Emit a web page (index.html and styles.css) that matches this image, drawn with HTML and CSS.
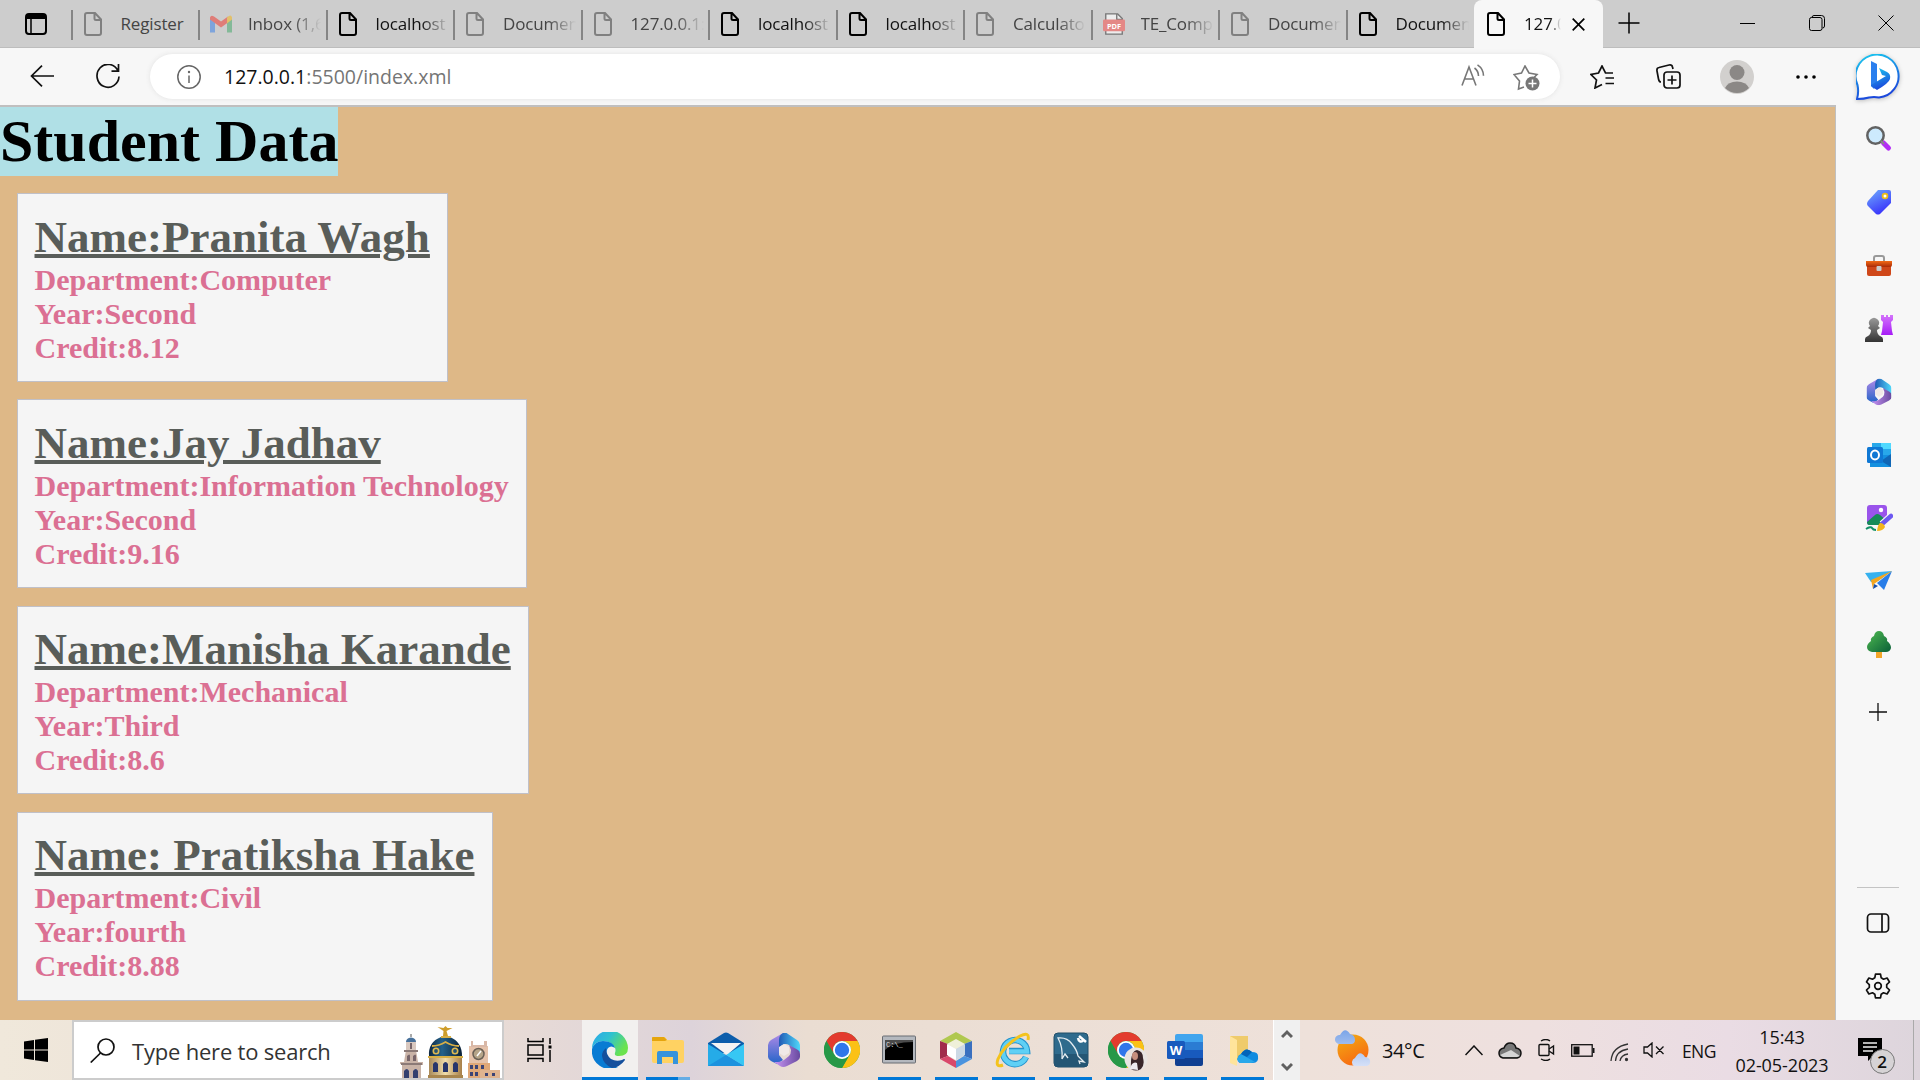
FILE: index.html
```html
<!DOCTYPE html>
<html lang="en">
<head>
<meta charset="utf-8">
<title>127.0.0.1:5500/index.xml</title>
<link rel="stylesheet" href="styles.css">
</head>
<body>
<svg class="defs" aria-hidden="true">
  <defs>
    <symbol id="file" viewBox="0 0 18 24"><path d="M3 1h8l6 6.500v13.500a2 2 0 0 1-2 2H3a2 2 0 0 1-2-2V3a2 2 0 0 1 2-2zM10.500 1v5.500a1.500 1.500 0 0 0 1.500 1.500h5" fill="none" stroke="currentColor" stroke-width="2"/></symbol>
    <linearGradient id="m1" x1="0" y1="0" x2="0" y2="1"><stop offset="0" stop-color="#b48be8"/><stop offset="1" stop-color="#2364c8"/></linearGradient>
    <linearGradient id="m2" x1="0" y1="0" x2="1" y2="0"><stop offset="0" stop-color="#215ab5"/><stop offset="1" stop-color="#4fd8fa"/></linearGradient>
    <linearGradient id="m3" x1="0" y1="0" x2="1" y2="0"><stop offset="0" stop-color="#c895f4"/><stop offset="1" stop-color="#694a9f"/></linearGradient>
    <symbol id="m365" viewBox="0 0 32 34"><path d="M15 0 3 7Q0 9 0 12v12q0 2 3 4l6 3 6-4-4-5V12q0-3 5-5l3-6Q17-1 15 0z" fill="url(#m1)"/><path d="M15 0q3-1 5 1l9 6q3 2 3 5v8L21 12q-5-3-10 3V7q0-5 4-7z" fill="url(#m2)"/><path d="m21 12 9 5q2 1 2 4v3q0 2-3 4l-10 5q-4 2-7 0l-6-4h4q3 0 6-2l5-4q2-2 2-6z" fill="url(#m3)"/><path d="m16 11 5 3v6l-5 3-5-3v-6z" fill="#f1e9e7"/></symbol>
    <symbol id="chrome" viewBox="0 0 36 36"><circle cx="18" cy="18" r="18" fill="#34a853"/><path d="M2.400 9A18 18 0 0 1 33.600 9H18a9 9 0 0 0-7.800 13.500z" fill="#e33b2e"/><path d="M33.600 9A18 18 0 0 1 18 36l7.800-13.500A9 9 0 0 0 18 9z" fill="#fbc116"/><path d="M2.400 9 10.200 22.500A9 9 0 0 0 25.800 22.500L18 36A18 18 0 0 1 2.400 9z" fill="#279847"/><circle cx="18" cy="18" r="9" fill="#fff"/><circle cx="18" cy="18" r="7.200" fill="#2f76ea"/></symbol>
    <linearGradient id="bingg" x1="0" y1="0" x2="0.300" y2="1"><stop offset="0" stop-color="#19cdf0"/><stop offset="1" stop-color="#1b48dc"/></linearGradient>
    <linearGradient id="tagg" x1="0" y1="0" x2="0.500" y2="1"><stop offset="0" stop-color="#70aefc"/><stop offset="1" stop-color="#3a35fb"/></linearGradient>
    <linearGradient id="boxg" x1="0" y1="0" x2="0" y2="1"><stop offset="0" stop-color="#f36b16"/><stop offset="1" stop-color="#a92a08"/></linearGradient>
    <linearGradient id="pawn" x1="0" y1="0" x2="0" y2="1"><stop offset="0" stop-color="#999"/><stop offset="1" stop-color="#333"/></linearGradient>
    <linearGradient id="rook" x1="0" y1="0" x2="0" y2="1"><stop offset="0" stop-color="#d474fb"/><stop offset="1" stop-color="#a61cf6"/></linearGradient>
    <linearGradient id="treeg" x1="0" y1="0" x2="1" y2="1"><stop offset="0" stop-color="#4fba50"/><stop offset="1" stop-color="#0a6038"/></linearGradient>
    <linearGradient id="edgeTop" x1="0" y1="0" x2="1" y2="0.500"><stop offset="0" stop-color="#2ba6ee"/><stop offset="0.500" stop-color="#2fc2cf"/><stop offset="1" stop-color="#6be34d"/></linearGradient>
    <linearGradient id="sun" x1="0" y1="0" x2="0.500" y2="1"><stop offset="0" stop-color="#f2b013"/><stop offset="1" stop-color="#f76a12"/></linearGradient>
    <linearGradient id="cloud" x1="0" y1="0" x2="0" y2="1"><stop offset="0" stop-color="#7ba5e8"/><stop offset="1" stop-color="#d5e0f7"/></linearGradient>
    <linearGradient id="domeg" x1="0" y1="0" x2="1" y2="0"><stop offset="0" stop-color="#0e2740"/><stop offset="0.400" stop-color="#23618a"/><stop offset="1" stop-color="#0a2036"/></linearGradient>
    <linearGradient id="stone" x1="0" y1="0" x2="1" y2="0"><stop offset="0" stop-color="#a98a5a"/><stop offset="0.500" stop-color="#f0dcaa"/><stop offset="1" stop-color="#a8804a"/></linearGradient>
  </defs>
</svg>

<header class="tabstrip">
  <div class="tabmenu"><svg width="22" height="22" viewBox="0 0 22 22"><rect x="1" y="1" width="20" height="20" rx="3" fill="none" stroke="#000" stroke-width="2"/><path d="M1 1h20v5H1z" fill="#000"/><path d="M6 6v15" stroke="#000" stroke-width="1.500"/></svg></div>
  <div class="tab dim"><svg class="fav"><use href="#file"/></svg><span>Register</span></div>
  <div class="tab dim gmail"><svg class="fav" viewBox="0 0 22 17"><path d="M0 2v15h5V6z" fill="#7ea4dc"/><path d="M17 6v11h5V2z" fill="#83b998"/><path d="M0 2q1-3 4-1l7 5 7-5v6l-7 5-11-8z" fill="#df7d78"/><path d="M17 2q4-4 5 0v2l-5 4z" fill="#e2c06a"/></svg><span>Inbox (1,6</span></div>
  <div class="tab"><svg class="fav"><use href="#file"/></svg><span>localhost</span></div>
  <div class="tab dim"><svg class="fav"><use href="#file"/></svg><span>Documen</span></div>
  <div class="tab dim"><svg class="fav"><use href="#file"/></svg><span>127.0.0.1:</span></div>
  <div class="tab"><svg class="fav"><use href="#file"/></svg><span>localhost</span></div>
  <div class="tab"><svg class="fav"><use href="#file"/></svg><span>localhost</span></div>
  <div class="tab dim"><svg class="fav"><use href="#file"/></svg><span>Calculato</span></div>
  <div class="tab dim pdf"><svg class="fav" viewBox="0 0 24 24"><path d="M3 1h13l5 5v17H3z" fill="#ededed" stroke="#777" stroke-width="1.500"/><path d="M15 1v6h6" fill="none" stroke="#777" stroke-width="1.500"/><rect x="0" y="7" width="24" height="13" rx="1.500" fill="#e48886"/><text x="12" y="17" text-anchor="middle" class="pdftext">PDF</text></svg><span>TE_Comp</span></div>
  <div class="tab dim"><svg class="fav"><use href="#file"/></svg><span>Documen</span></div>
  <div class="tab"><svg class="fav"><use href="#file"/></svg><span>Documen</span></div>
  <div class="tab active"><svg class="fav"><use href="#file"/></svg><span>127.0</span><svg class="x" width="13" height="13" viewBox="0 0 13 13"><path d="m.7.700 11.600 11.600m0-11.600L.7 12.300" stroke="#000" stroke-width="1.700"/></svg></div>
  <svg class="newtab" width="22" height="22" viewBox="0 0 22 22"><path d="M11 .500v21M.500 11h21" stroke="#000" stroke-width="1.500"/></svg>
  <div class="winbtns">
    <svg width="16" height="16" viewBox="0 0 16 16"><path d="M0 8.500h15" stroke="#000"/></svg>
    <svg width="16" height="16" viewBox="0 0 16 16" fill="none" stroke="#000"><rect x=".5" y="2.500" width="12.500" height="13" rx="2"/><path d="M3 2.500Q3 .500 5 .500h7.500q3 0 3 3V11q0 2-2 2"/></svg>
    <svg width="16" height="16" viewBox="0 0 16 16"><path d="m.5.500 15 15m0-15-15 15" stroke="#000"/></svg>
  </div>
</header>

<nav class="toolbar">
  <svg class="back" width="24" height="22" viewBox="0 0 24 22" fill="none" stroke="#111" stroke-width="1.700"><path d="M12 .700 1.500 11 12 21.300M1.500 11H24"/></svg>
  <svg class="reload" width="24" height="25" viewBox="0 0 24 25" fill="none" stroke="#111" stroke-width="1.700"><path d="M22 7A11 11.500 0 1 0 23 12.500M22.500 0v7.200H15.500"/></svg>
  <div class="address">
    <svg width="24" height="24" viewBox="0 0 24 24"><circle cx="12" cy="12" r="11.200" fill="none" stroke="#666" stroke-width="1.500"/><path d="M12 10.500v7.500" stroke="#666" stroke-width="1.500"/><circle cx="12" cy="7" r="1.200" fill="#666"/></svg>
    <span class="url"><b>127.0.0.1</b>:5500/index.xml</span>
    <svg class="aloud" width="24" height="23" viewBox="0 0 24 23" fill="none" stroke="#777" stroke-width="1.600"><path d="m1 21.500 7-18.500 7 18.500M3.500 15h9M13.500 4q4 3 4 8M16.500.800q6 4 6 11"/></svg>
    <svg class="staradd" width="27" height="26" viewBox="0 0 27 26"><path d="m11 22-5.500 2 1-8L1 9.500l7.500-1.500L12 1l4 7 8 1.500-3 3" fill="none" stroke="#777" stroke-width="1.600"/><circle cx="19.500" cy="18.500" r="7" fill="#777"/><path d="M19.500 14.500v8m-4-4h8" stroke="#fff" stroke-width="1.500"/></svg>
  </div>
  <svg class="fav-list" width="25" height="24" viewBox="0 0 25 24" fill="none" stroke="#111" stroke-width="1.700"><path d="m12 19.500-7 3.500 1.500-8L1 9.500 8.500 8 12 1l3.500 7H23M15.500 13H24M15.500 18.500H24"/></svg>
  <svg class="collect" width="25" height="25" viewBox="0 0 25 25" fill="none" stroke="#111" stroke-width="1.700"><rect x="8" y="8" width="16" height="16" rx="3"/><path d="M16 11.500v9M11.500 16h9M5 18q-2 0-2.500-3L1 7q-.500-3 2-3.500L13 1q3-.500 3.500 2l.5 2"/></svg>
  <svg class="avatar" width="34" height="34" viewBox="0 0 34 34"><circle cx="17" cy="17" r="17" fill="#d2d0ce"/><circle cx="17" cy="12.500" r="7.500" fill="#8b8886"/><path d="M5 28q3-6.500 12-6.500T29 28A17 17 0 0 1 5 28z" fill="#8b8886"/></svg>
  <svg class="dots" width="20" height="4" viewBox="0 0 20 4"><circle cx="2" cy="2" r="1.800"/><circle cx="10" cy="2" r="1.800"/><circle cx="18" cy="2" r="1.800"/></svg>
  <svg class="bing" width="46" height="46" viewBox="0 0 46 46"><path d="M1 45Q3 38 1.500 31A21.500 21.500 0 1 1 23 43.500Q18 42.500 13 43.500 8 45 1 45z" fill="#fff" stroke="url(#bingg)" stroke-width="2"/><path d="m15 7 6 3v20l-3 5-3-3z" fill="#2b7fee"/><path d="m15 31 15-9-4-1-3-7 8 4q4 2 3 7-1 4-13 11l-6-4z" fill="url(#bingg)"/></svg>
</nav>

<div class="middle">
  <main class="page">
    <h1>Student Data</h1>
    <section class="card"><h2>Name:Pranita Wagh</h2><p>Department:Computer</p><p>Year:Second</p><p>Credit:8.12</p></section>
    <section class="card"><h2>Name:Jay Jadhav</h2><p>Department:Information Technology</p><p>Year:Second</p><p>Credit:9.16</p></section>
    <section class="card"><h2>Name:Manisha Karande</h2><p>Department:Mechanical</p><p>Year:Third</p><p>Credit:8.6</p></section>
    <section class="card"><h2>Name: Pratiksha Hake</h2><p>Department:Civil</p><p>Year:fourth</p><p>Credit:8.88</p></section>
  </main>
  <aside class="sidebar">
    <svg viewBox="0 0 28 28"><path d="m18.500 18 5 5" stroke="#b32cf5" stroke-width="5" stroke-linecap="round"/><circle cx="10.500" cy="10.500" r="8.200" fill="#cdeafd" stroke="#626262" stroke-width="2.500"/><path d="m16 16 3 3" stroke="#888" stroke-width="2"/></svg>
    <svg viewBox="0 0 28 28"><path d="M13 2h11q2 0 2 2v11L15 26q-2 1-4 0l-8-8q-2-2 0-5z" fill="url(#tagg)"/><circle cx="20" cy="8" r="2.400" fill="#fff" stroke="#eebd18" stroke-width="1.800"/></svg>
    <svg viewBox="0 0 28 28"><path d="M9 10V7q0-2 2-2h6q2 0 2 2v3" fill="none" stroke="#999" stroke-width="2"/><rect x="2" y="12" width="24" height="13" rx="2" fill="#cf4719"/><path d="M1 10h26v4q0 2-2 2H3q-2 0-2-2z" fill="url(#boxg)"/><rect x="11.500" y="15" width="5" height="5" rx="1" fill="#c9cccc"/></svg>
    <svg viewBox="0 0 28 28"><path d="M16 1h3v2h2V1h2v2h2V1h3v5l-2 2 1 9 1 4H16l1-4 1-9-2-2z" fill="url(#rook)"/><path d="M5 12a5 5 0 1 1 8 0l2 2-3 2q0 4 3 6 3 1 3 3v3H0v-3q0-2 3-3 3-2 3-6l-3-2z" fill="url(#pawn)"/></svg>
    <svg viewBox="-1 -1 34 36"><use href="#m365" width="32" height="34"/></svg>
    <svg viewBox="0 0 28 28"><path d="M7 2h19v13H7z" fill="#28a8ea"/><path d="M16 2h10v6H16z" fill="#50d9ff"/><path d="M5 14h21v12H5z" fill="#1490df"/><path d="m26 13-10 7 10 6z" fill="#1066b5"/><rect x="2" y="6" width="16" height="16" rx="1.500" fill="#0f78d4"/><ellipse cx="10" cy="14" rx="4" ry="4.500" fill="none" stroke="#fff" stroke-width="2"/></svg>
    <svg viewBox="0 0 28 28"><rect x="2" y="1" width="20" height="20" rx="3" fill="#9a54eb"/><circle cx="16" cy="6" r="2.200" fill="#fff"/><path d="m2 18 8-7q2-2 5 0l7 6-4 4H4q-2 0-2-3z" fill="#168b58"/><path d="m17 20 9-8" stroke="#f7f7f7" stroke-width="7"/><path d="m17 20 9-8" stroke="#6d58f1" stroke-width="4.500" stroke-linecap="round"/><path d="M15 19q4 0 5 4-2 4-8 4 1-7 3-8z" fill="#f3b51d"/><path d="M1 25q5-3 6-1t4 2" fill="none" stroke="#129066" stroke-width="2"/></svg>
    <svg viewBox="0 0 28 28"><path d="m0 6 27-2-14 10-7 1z" fill="#36b1ee"/><path d="m27 4-8 19-7-7z" fill="#287de8"/><path d="M6 13 27 4 9 17l-1 5z" fill="#f5a61d"/><path d="m8 22 1-5 4 2z" fill="#174eaa"/></svg>
    <svg viewBox="0 0 28 28"><path d="M11 20h6v8h-6z" fill="#f3a62a"/><path d="M14 1q4 0 5 5 4 2 3 5 4 3 4 7-1 4-5 4H7q-5-1-5-5 0-3 4-6-1-3 3-5 1-5 5-5z" fill="url(#treeg)"/></svg>
    <svg class="plus" viewBox="0 0 18 18"><path d="M9 0v18M0 9h18" stroke="#111" stroke-width="1.300"/></svg>
    <hr>
    <svg class="panel" viewBox="0 0 24 20" fill="none" stroke="#111" stroke-width="1.700"><rect x="1.500" y="1" width="21" height="18" rx="3.500"/><path d="M16 1v18"/></svg>
    <svg class="gear" viewBox="0 0 26 26" fill="none" stroke="#111" stroke-width="1.700" stroke-linejoin="round"><path d="M10.500 1.200h5l.7 3.600 2.300 1.400 3.600-1.200 2.400 4-2.800 2.600v2.800l2.800 2.600-2.400 4-3.600-1.200-2.300 1.400-.7 3.600h-5l-.7-3.600-2.300-1.400-3.600 1.200-2.400-4 2.800-2.600v-2.800L1.500 9l2.400-4 3.600 1.200 2.300-1.400z"/><circle cx="13" cy="13" r="3.300"/></svg>
  </aside>
</div>

<footer class="taskbar">
  <div class="start"><svg width="24" height="24" viewBox="0 0 24 24"><path d="M0 3.500 10 2v9.400H0zM11 1.800 24 0v11.400H11zM0 12.400h10V22L0 20.500zM11 12.400h13V24l-13-1.800z"/></svg></div>
  <div class="search">
    <svg width="25" height="25" viewBox="0 0 25 25" fill="none" stroke="#111" stroke-width="1.700"><circle cx="16" cy="9" r="8"/><path d="M10.500 15 .700 24.500"/></svg>
    <span>Type here to search</span>
    <svg class="city" width="104" height="53" viewBox="0 0 104 53">
      <path d="M4 53V39H2v-2h4l2-12h10l2 12h5v3h-2v13z" fill="#c9b3a7"/><path d="M6 25h14v2H6zM3 38h21v2H3z" fill="#8b7a77"/><path d="M8 16h10v9H8z" fill="#d9c8bf"/><path d="M8 17q0-4 5-4.500 5 .500 5 4.500z" fill="#48719b"/><path d="M12 18h2v6h-2zM9 31q3-3 3 0v5H9zM15 31q3-3 3 0v5h-3z" fill="#77656a"/><path d="M6 46q3-4 5 0v7H6zM15 46q3-4 5 0v7h-5z" fill="#33406f"/><path d="M13 12v-3" stroke="#555"/>
      <path d="M31 31h33v22H31z" fill="url(#stone)"/><path d="M31 31Q30 17 43 12h9q12 5 12 19z" fill="url(#domeg)"/><path d="M34 21q7 0 13.500-4 6.500 4 13.500 4M30 32h35M43 12h10" stroke="#d8af45" stroke-width="1.800" fill="none"/><circle cx="38" cy="26" r="2.700" fill="#28536f" stroke="#ddb851" stroke-width="1.600"/><circle cx="57" cy="26" r="2.700" fill="#28536f" stroke="#ddb851" stroke-width="1.600"/><path d="M45 11h5L48.500 6l6-3-5 0-2-2-2 2-6-1 6 4z" fill="#cf9e2c"/><path d="M35 39q2.500-4 5 0v8h-5zM45 39q2.500-4 5 0v8h-5zM55 39q2.500-4 5 0v8h-5z" fill="#27356b"/><path d="M30 50h35v3H30z" fill="#a8854d"/>
      <path d="M71 21h19v20H71z" fill="#e5c2aa"/><path d="M73 16h2v4h11v-4h3v6H73z" fill="#d9b8a7"/><path d="M70 38h22v15H70z" fill="#e0a878"/><circle cx="80.500" cy="29" r="5.500" fill="#b5a488" stroke="#6a6056" stroke-width="1.500"/><path d="m79 31 4-5" stroke="#fff" stroke-width="1.500"/><path d="M82 45h20v8H82z" fill="#dfb48f"/><path d="M72 40h3v4h-3zM77 40h3v4h-3zM83 40h3v4h-3zM72 47h3v4h-3zM77 47h3v4h-3zM87 48h3v3h-3zM94 48h3v3h-3z" fill="#3c4475"/>
    </svg>
  </div>
  <div class="taskview"><svg width="25" height="24" viewBox="0 0 25 24" fill="none" stroke="#000" stroke-width="1.500"><path d="M1 0v3.500h15V0M1 24v-3.500h15V24M1 7h15v10H1zM23 0v6M23 12v12"/><path d="M21.500 7.500h3v3h-3z" fill="#000" stroke="none"/></svg></div>
  <div class="apps">
    <div class="app current"><svg viewBox="0 0 36 36"><path d="M0 17A18 18 0 0 1 36 16q0 8-9 8-5 0-4-3 1-3 0-5-3-7-12-7Q3 9 0 17z" fill="url(#edgeTop)"/><path d="M0 17Q3 9 11 9q10 0 12 7-4-3-7 0-3 4-1 9 3 8 11 10A18 18 0 0 1 0 17z" fill="#087bd3"/><path d="M14 16q-4 3-4 8 1 8 10 12 8-1 13-8 0-2-3 0-6 2-11-1-5-4-5-11z" fill="#15509d"/></svg></div>
    <div class="app open stacked"><svg viewBox="0 0 36 36"><path d="M2 6q0-1 1-1h11q2 0 3 3h15q2 0 2 2v19q0 2-2 2H4q-2 0-2-2z" fill="#ffd262"/><path d="M2 9V6q0-1 1-1h11l3 3-2 1z" fill="#e5a50d"/><path d="M7 32V21q0-2 2-2h17q2 0 2 2v11h-5v-7H12v7z" fill="#3693dc"/></svg></div>
    <div class="app"><svg viewBox="0 0 36 36"><path d="M0 11 16 1q2-1 4 0l16 10v10H0z" fill="#0c5dab"/><path d="M3 11h30l-14 12z" fill="#f4f3f3"/><path d="M0 12 36 34H0z" fill="#25abe8"/><path d="m36 12-18 11 18 11z" fill="#37c7f4"/><path d="m0 34 18-11 18 11z" fill="#1c92de"/></svg></div>
    <div class="app"><svg viewBox="0 0 36 36"><use href="#m365" x="2" y="1" width="32" height="34"/></svg></div>
    <div class="app"><svg><use href="#chrome"/></svg></div>
    <div class="app open"><svg viewBox="0 0 36 36"><rect x="1.500" y="4" width="33" height="27" rx="1" fill="#b4b8be" stroke="#686c72"/><path d="M4 8h28v20H4z" fill="#000"/><path d="M4 8h28v2Q12 10 4 18z" fill="#4b4b4b"/><text x="5" y="14.500" class="cmdtext">C:\_</text></svg></div>
    <div class="app open"><svg viewBox="0 0 36 36"><path d="M18 0 34 9 26 12 18 8l-8 4-8-3z" fill="#b0c84f"/><path d="m2 9 8 3v12l-8 3z" fill="#a12c4b"/><path d="m34 9-8 3v12l8 3z" fill="#3a70bf"/><path d="m2 27 8-3 8 5v7z" fill="#d9486b"/><path d="m34 27-8-3-8 5v7z" fill="#4b94df"/><path d="m18 7 9 5-9 5-9-5z" fill="#eff0d9"/><path d="m9 12 9 5v11l-9-5z" fill="#fff"/><path d="m27 12-9 5v11l9-5z" fill="#ccd9e5"/></svg></div>
    <div class="app open"><svg viewBox="0 0 36 36"><path d="M31 25A12 12 0 1 1 32 19H14" fill="none" stroke="#2593cc" stroke-width="6.500"/><path d="M31 25A12 12 0 1 1 32 19.500H14" fill="none" stroke="#5fd0f5" stroke-width="4.500"/><path d="M8 33q-8 3-5-6Q9 13 25 4q10-5 8 4" fill="none" stroke="#f4c31d" stroke-width="3"/></svg></div>
    <div class="app open"><svg viewBox="0 0 36 36"><rect x="1" y="1" width="34" height="34" rx="4" fill="#2f6b8d" stroke="#204e69"/><path d="M1 22h34v9q0 4-4 4H5q-4 0-4-4z" fill="#245674"/><path d="M9 27Q10 15 5 6q9-1 14 6 5 6 6 12l6 6-5-1 1 3M9 27l3-5 3 4" fill="none" stroke="#e5edf1" stroke-width="1.300"/><path d="m26 4 7 6M25 6q1 5 5 3" stroke="#fff" stroke-width="2.500" fill="none"/></svg></div>
    <div class="app open"><svg class="wide" viewBox="0 0 40 39"><use href="#chrome" width="36" height="36"/><circle cx="28" cy="27" r="11.500" fill="#e9e4e1"/><path d="M23 37q-1-18 6-19 6 1 6 8 2 7-2 11-5 3-10 0z" fill="#39262a"/><ellipse cx="27" cy="24" rx="3" ry="4" fill="#c78f7e"/><path d="M22 37q2-8 7-6l1 7z" fill="#edebf0"/></svg></div>
    <div class="app open"><svg viewBox="0 0 36 36"><path d="M8 4q0-2 2-2h24q2 0 2 2v6H8z" fill="#41a5ee"/><path d="M8 10h28v8H8z" fill="#2b7cd3"/><path d="M8 18h28v8H8z" fill="#185abd"/><path d="M8 26h28v6q0 2-2 2H10q-2 0-2-2z" fill="#103f91"/><rect x="0" y="9" width="18" height="18" rx="1.500" fill="#185abd"/><text x="9" y="22.500" text-anchor="middle" class="wordtext">W</text></svg></div>
    <div class="app open"><svg viewBox="0 0 36 36"><path d="M6 4h18v24H6z" fill="#efcb6b"/><path d="m6 4 7 4v26l-7-3z" fill="#ffe49b"/><path d="M16 31a5 5 0 0 1 1-9q5-8 11-2 6 0 6 4 1 7-5 7z" fill="#108be0"/><path d="m17 22 14 8-4 1H16q-6-4 1-9z" fill="#28a8ea"/><path d="M17 22q5-8 11-2l-5 5z" fill="#0364b8"/></svg></div>
  </div>
  <div class="scroller"><svg viewBox="0 0 12 10"><path d="m1 8 5-5 5 5" fill="none" stroke="#606060" stroke-width="3"/></svg><svg viewBox="0 0 12 10"><path d="m1 2 5 5 5-5" fill="none" stroke="#606060" stroke-width="3"/></svg></div>
  <div class="tray">
    <svg class="weather" width="36" height="38" viewBox="0 0 36 38"><circle cx="18" cy="20" r="15.500" fill="url(#sun)"/><path d="M4 14a4.500 4.500 0 0 1 1-9q5-9 10-1 5 1 5 6 0 3-3 4zM19 36a4.500 4.500 0 0 1 1-8q5-9 10-1 6 1 5 6 0 2-3 3z" fill="url(#cloud)"/></svg>
    <span class="temp">34°C</span>
    <svg class="chev" width="18" height="11" viewBox="0 0 18 11"><path d="m.500 10 8.500-9 8.500 9" fill="none" stroke="#111" stroke-width="1.500"/></svg>
    <svg class="onedrive" width="24" height="17" viewBox="0 0 24 17"><path d="M5 16Q1 15 1 11q0-4 5-5 2-5 6-5 5 0 6 5 5 1 5 5t-4 5z" fill="#777" stroke="#111" stroke-width="1.500"/><path d="m2 13 11-5 9 6-3 1H5z" fill="#d5d5d5"/></svg>
    <svg class="cam" width="17" height="22" viewBox="0 0 17 22" fill="none" stroke="#111" stroke-width="1.400"><rect x="1" y="5.500" width="10" height="11" rx="1"/><path d="m11 10 4.500-3v8L11 12M3 2q5-3 9 0M3 20q5 3 9 0"/></svg>
    <svg class="batt" width="24" height="13" viewBox="0 0 24 13"><rect x=".7" y=".7" width="20.500" height="11.500" fill="none" stroke="#111" stroke-width="1.300"/><path d="M2.500 2.500h6v8h-6zM22 4h1.500v5H22z" fill="#111"/></svg>
    <svg class="wifi" width="19" height="19" viewBox="0 0 19 19" fill="none" stroke="#333" stroke-width="1.300"><path d="M1 18Q2 4 18 1M5.500 18Q6 8 18 6M10 18Q11 12 18 11"/><circle cx="16.500" cy="16.500" r="1" fill="#111"/></svg>
    <svg class="mute" width="22" height="16" viewBox="0 0 22 16" fill="none" stroke="#111" stroke-width="1.300"><path d="M1 5h3.500L9 1v14l-4.500-4H1zM13 4.500l7.500 7.500m0-7.500L13 12"/></svg>
    <span class="lang">ENG</span>
    <div class="clock"><span>15:43</span><span>02-05-2023</span></div>
    <div class="notif"><svg width="25" height="24" viewBox="0 0 25 24"><path d="M0 0h24v18h-9l-5 5v-5H0z"/><path d="M5 5h14M5 9h14M5 13h10" stroke="#eee" stroke-width="1.300"/></svg><b>2</b></div>
    <div class="desk"></div>
  </div>
</footer>
</body>
</html>
```
FILE: styles.css
```css
* { box-sizing: border-box; }
body { margin: 0; width: 1920px; height: 1080px; overflow: hidden; display: flex; flex-direction: column; font-family: "Open Sans", "Noto Sans", sans-serif; color: #111; background: #f7f7f7; }
svg { display: block; flex: none; }
.defs { position: absolute; width: 0; height: 0; }

/* tabs */
.tabstrip { height: 48px; flex: none; display: flex; background: #cdcdcd; box-shadow: inset 0 -1px 0 #bdbdbd; }
.tabmenu { width: 71.500px; padding: 13px 0 0 25px; flex: none; }
.tab { width: 127.500px; flex: none; display: flex; align-items: center; padding-left: 12px; position: relative; }
.tab::before { content: ""; position: absolute; left: -1px; top: 10px; width: 2px; height: 30px; background: #858585; }
.tab .fav { width: 18px; height: 24px; color: #000; }
.tab.dim .fav { color: #808080; }
.gmail .fav, .pdf .fav { width: 22px; margin-left: -1px; margin-right: -3px; }
.tab span { margin-left: 19px; width: 76px; white-space: nowrap; font-size: 17px; line-height: 24px; letter-spacing: -0.150px; -webkit-mask-image: linear-gradient(90deg, #000 45px, transparent 73px); mask-image: linear-gradient(90deg, #000 45px, transparent 73px); }
.tab:nth-child(2) span { -webkit-mask-image: none; mask-image: none; }
.tab.dim span { color: #444; }
.tab.active { width: 128.500px; background: #f7f7f7; border-radius: 8px 8px 0 0; padding-left: 13px; }
.tab.active::before { display: none; }
.tab.active span { width: 44px; -webkit-mask-image: linear-gradient(90deg, #000 26px, transparent 37px); mask-image: linear-gradient(90deg, #000 26px, transparent 37px); }
.tab.active .x { margin: 1px 0 0 4px; }
.newtab { margin: 12px 0 0 15px; }
.winbtns { display: flex; gap: 53px; margin: 15px 26px 0 auto; }
.pdftext { font: bold 8px "Open Sans", sans-serif; fill: #fff; }

/* toolbar */
.toolbar { height: 57px; flex: none; display: flex; align-items: center; padding-left: 30px; background: #f7f7f7; }
.back { margin-top: -1px; }
.reload { margin-left: 42px; }
.address { width: 1410px; height: 45px; margin-left: 30px; border-radius: 23px; background: #fff; box-shadow: 0 0 5px #e2e2e2; display: flex; align-items: center; padding-left: 27px; flex: none; }
.url { margin: -1px 0 0 23px; font-size: 19.500px; color: #757575; letter-spacing: 0; }
.url b { font-weight: 400; color: #111; }
.aloud { margin: -2px 0 0 auto; }
.staradd { margin: 2px 20px 0 28px; }
.fav-list { margin-left: 30px; }
.collect { margin-left: 41px; }
.avatar { margin-left: 39px; }
.dots { margin-left: 42px; }
.bing { margin-left: 39.500px; filter: drop-shadow(0 1px 2px #bbb); }

/* page and sidebar */
.middle { height: 915px; flex: none; display: flex; }
.page { width: 1836px; flex: none; background: #deb887; border-top: 2px solid #c0bfbf; border-right: 1px solid #c0c0c0; font-family: "Liberation Serif", "Times New Roman", serif; font-weight: bold; }
h1 { width: 338px; height: 69px; margin: 0 0 17px; font-size: 60px; line-height: 69px; color: #000; background: #b0e0e6; white-space: nowrap; }
.card { width: fit-content; height: 188.900px; margin: 0 0 17.400px 17px; padding: 16.600px 17.300px 0 16.500px; border: 1px solid #c0c0c8; background: #f5f5f5; white-space: nowrap; }
.card h2 { margin: 0; font-size: 45px; line-height: 52px; color: #595d59; text-decoration: underline; text-decoration-thickness: 4px; }
.card p { margin: 0; font-size: 30px; line-height: 34px; color: #db7093; }
.sidebar { width: 84px; padding: 20px 0 0 29px; display: flex; flex-direction: column; gap: 35.150px; }
.sidebar svg { width: 28px; height: 28px; }
.sidebar .plus { width: 18px; height: 18px; margin: 10px 0 0 4px; }
.sidebar hr { width: 42px; height: 1px; margin: 130.500px 0 0 -8px; border: 0; background: #c4c4c4; flex: none; }
.sidebar .panel { width: 24px; height: 20px; margin: -10px 0 0 1px; }
.sidebar .gear { width: 26px; height: 26px; margin: 4.500px 0 0 0; }

/* taskbar */
.taskbar { height: 60px; flex: none; display: flex; background: linear-gradient(90deg, #f0e8db 0, #e9dcd5 25%, #ddd3da 36%, #eaddd2 42%, #eee1da 68%, #eee0df 80%, #eadce4 90%, #ddd5dc 100%); }
.start { width: 72px; padding: 18px 0 0 24px; }
.search { width: 432px; height: 60px; display: flex; align-items: center; padding-left: 16px; background: #fff; border: 2px solid #ccc; overflow: hidden; }
.search span { margin: 2px 0 0 17px; font-size: 22px; letter-spacing: -0.200px; white-space: nowrap; color: #333; }
.city { align-self: flex-end; margin-left: auto; }
.taskview { width: 76.500px; padding: 18px 0 0 23px; }
.apps { display: flex; width: 692.500px; }
.app { width: 57.200px; height: 60px; display: flex; justify-content: center; padding-top: 12px; flex: none; background: linear-gradient(#0078d7, #0078d7) no-repeat center bottom / 0 3px; }
.app:nth-child(-n+5) { width: 58px; }
.app svg { width: 36px; height: 36px; }
.app svg.wide { width: 40px; height: 39px; }
.app.open { background-size: 43px 3px; }
.app.current { background: linear-gradient(#0078d7, #0078d7) no-repeat center bottom / 56px 3px, linear-gradient(#f2f0ef, #f2f0ef) no-repeat center / 56px 60px; }
.app.stacked { background: linear-gradient(90deg, #0078d7 32px, #65ade5 32px) no-repeat center bottom / 44px 3px; }
.cmdtext { font: 7px "Liberation Mono", monospace; fill: #ddd; }
.wordtext { font: bold 13px "Open Sans", sans-serif; fill: #fff; }
.scroller { width: 27px; border-left: 1px solid #fff; background: #f0f0f0; display: flex; flex-direction: column; justify-content: space-between; align-items: center; padding: 9px 0 8px; }
.scroller svg { width: 12px; height: 10px; }
.tray { flex: 1; display: flex; align-items: center; white-space: nowrap; }
.weather { margin: -3px 0 0 35px; }
.temp { width: 46px; margin: 1px 0 0 11px; font-size: 20px; letter-spacing: -0.400px; }
.chev { margin-left: 37px; }
.onedrive { margin-left: 15px; }
.cam { margin-left: 16px; }
.batt { margin-left: 16px; }
.wifi { margin: 4px 0 0 15px; }
.mute { margin-left: 14px; }
.lang { width: 35px; margin: 1px 0 0 17px; font-size: 17.500px; letter-spacing: -0.600px; }
.clock { width: 96px; margin: 1px 0 0 17px; display: flex; flex-direction: column; align-items: center; font-size: 18px; line-height: 28px; letter-spacing: -0.100px; }
.notif { width: 25px; height: 24px; margin-left: 28px; position: relative; }
.notif b { position: absolute; left: 11.500px; top: 11px; width: 25px; height: 25px; border: 1px solid #777; border-radius: 50%; background: #d6d3d5; font-size: 17px; font-weight: 600; line-height: 23px; text-align: center; }
.desk { width: 7px; height: 60px; margin-left: auto; border-left: 1px solid #aaa; }
```
